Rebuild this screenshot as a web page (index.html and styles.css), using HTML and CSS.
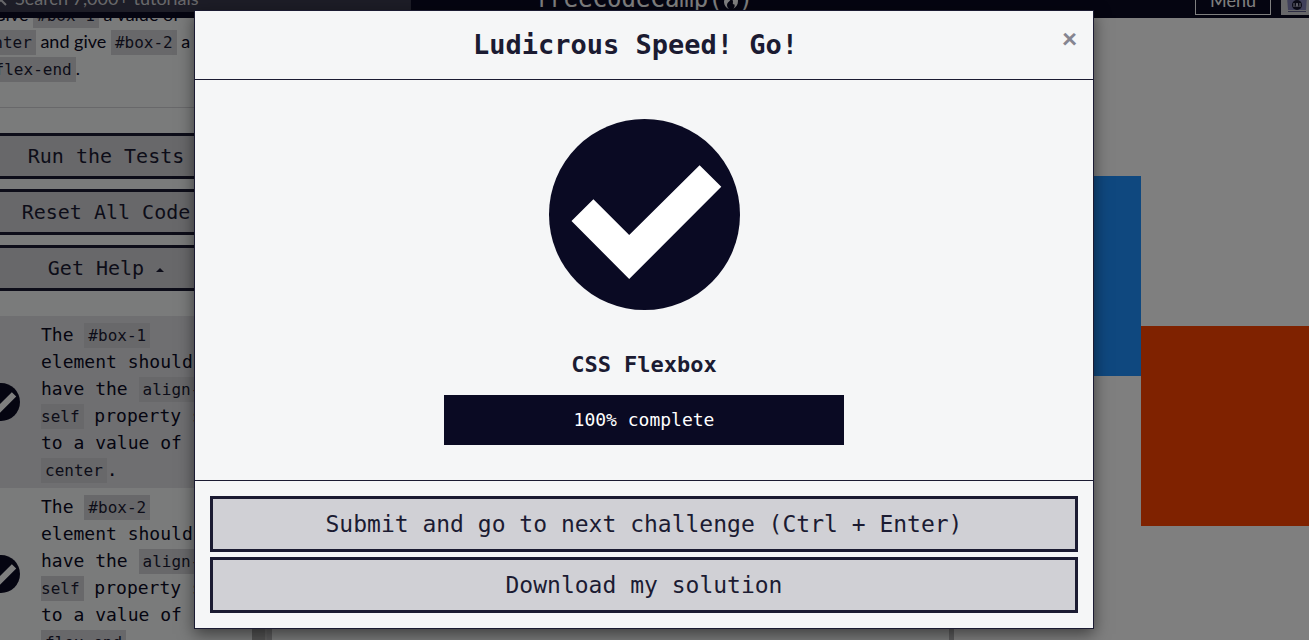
FILE: index.html
```html
<!DOCTYPE html>
<html lang="en">
<head>
<meta charset="utf-8">
<title>CSS Flexbox challenge</title>
<link rel="stylesheet" href="styles.css">
</head>
<body>
<div class="shell">
  <header class="topbar">
    <label class="search">
      <svg class="search-icon" viewBox="0 0 16 16" aria-hidden="true"><circle cx="6.500" cy="6.500" r="5"/><path d="M10 10l5 5"/></svg>
      <input class="search-input" type="search" placeholder="Search 7,000+ tutorials" aria-label="Search tutorials">
    </label>
    <a class="brand" href="#">freeCodeCamp(<svg class="flame" viewBox="0 0 16 20" aria-hidden="true"><path d="M8 0c1 4 7 6 7 12 0 4-2 6-5 8 2-2 2-4 1-5-1 1-1.500 0-1-2 0-2-1-3-2-4 0 3-4 4-4 7 0 2 1 3 2 4-3-1-5-4-5-7C1 8 7 6 8 0z"/></svg>)</a>
    <nav class="account">
      <button class="menu" type="button">Menu</button>
      <a class="avatar" href="#" aria-label="Profile">
        <svg viewBox="0 0 32 32" aria-hidden="true"><path fill="#8080b4" d="M5 0h22l-2 27H7z"/><path fill="#5c5c88" d="M7 28h18v1H7z"/><circle cx="16" cy="22" r="5" fill="#15152c"/><path d="M13 24v-4m6 4v-4m-4 4l1-4 1 4" stroke="#d0d0e5" fill="none"/></svg>
      </a>
    </nav>
  </header>

  <main class="workspace">
    <section class="lesson">
      <p class="instructions"><code class="tail">2</code>. Give <code>#box-1</code> a value of <code>center</code> and give <code>#box-2</code> a value of <code>flex-end</code>.</p>
      <hr>
      <div class="actions">
        <button type="button">Run the Tests</button>
        <button type="button">Reset All Code</button>
        <button type="button">Get Help <span class="caret"></span></button>
      </div>
      <ul class="tests">
        <li>
          <svg class="test-icon" viewBox="0 0 191 191" aria-hidden="true"><circle cx="95.500" cy="95.500" r="95.500"/><path d="M22 102l22-22 36 36 70-70 22 22-92 92z"/></svg>
          <p>The <code>#box-1</code> element should have the <code>align-self</code> property set to a value of <code>center</code>.</p>
        </li>
        <li>
          <svg class="test-icon" viewBox="0 0 191 191" aria-hidden="true"><circle cx="95.500" cy="95.500" r="95.500"/><path d="M22 102l22-22 36 36 70-70 22 22-92 92z"/></svg>
          <p>The <code>#box-2</code> element should have the <code>align-self</code> property set to a value of <code>flex-end</code>.</p>
        </li>
      </ul>
    </section>
    <div class="scroll-track"></div>
    <div class="splitter"></div>
    <section class="editor"></section>
    <div class="splitter"></div>
    <section class="preview">
      <div class="box-container">
        <div class="box box-1"></div>
        <div class="box box-2"></div>
      </div>
    </section>
  </main>

  <div class="backdrop">
    <div class="modal" role="dialog" aria-labelledby="modal-title">
      <div class="modal-header">
        <h4 class="modal-title" id="modal-title">Ludicrous Speed! Go!</h4>
        <button class="close" type="button" aria-label="Close">×</button>
      </div>
      <div class="modal-body">
        <svg class="success" viewBox="0 0 191 191" aria-hidden="true"><circle cx="95.500" cy="95.500" r="95.500"/><path d="M22.500 102L44.400 80.200 80.200 116 150.600 46.200 172.300 67.800 80.200 160z"/></svg>
        <h5 class="block-name">CSS Flexbox</h5>
        <div class="progress">100% complete</div>
      </div>
      <div class="modal-footer">
        <button type="button">Submit and go to next challenge (Ctrl + Enter)</button>
        <button type="button">Download my solution</button>
      </div>
    </div>
  </div>
</div>
</body>
</html>
```

FILE: styles.css
```css
:root {
  --navy: #0a0a23;
  --ink: #1b1b32;
  --paper: #f5f6f7;
  --grey: #d0d0d5;
  --mono: "DejaVu Sans Mono", monospace;
  --sans: Lato, sans-serif;
}

* { box-sizing: border-box; }

body {
  margin: 0;
  overflow: hidden;
  font: 18px/27px var(--sans);
  color: var(--navy);
}

p, h4, h5, ul { margin: 0; padding: 0; }
button { font-family: var(--mono); color: var(--ink); }

.shell {
  position: relative;
  display: flex;
  flex-direction: column;
  height: 100vh;
  margin: 0 -19px 0 -40px;
  overflow: hidden;
}

/* Top bar */
.topbar {
  position: relative;
  z-index: 1;
  flex: none;
  display: grid;
  grid-template-columns: 1fr auto 1fr;
  align-items: center;
  height: 38px;
  margin-top: -20px;
  padding: 0 15px;
  background: var(--navy);
}
.search {
  display: flex;
  align-items: center;
  gap: 8px;
  width: 436px;
  height: 30px;
  padding: 2px 16px 0;
  margin-bottom: 4px;
  background: #3b3b4f;
}
.search-icon { width: 16px; height: 16px; fill: none; stroke: #d0d0d5; stroke-width: 2; }
.search-input {
  flex: 1;
  min-width: 0;
  padding: 0;
  border: 0;
  background: none;
  font: 18px/27px var(--sans);
  color: #d0d0d5;
}
.search-input::placeholder { color: #d0d0d5; }
.brand {
  display: flex;
  align-items: center;
  font: 24px/28px var(--mono);
  color: #fff;
  text-decoration: none;
}
.flame { width: 16px; height: 20px; fill: #fff; }
.account { display: flex; justify-content: flex-end; gap: 10px; }
.menu {
  width: 76px;
  height: 32px;
  padding: 2px 0 0;
  border: 1px solid #fff;
  background: none;
  font: 18px/24px var(--sans);
  color: #fff;
}
.avatar { width: 32px; height: 32px; background: var(--grey); }
.avatar svg { display: block; }

/* Workspace */
.workspace { flex: 1; display: flex; min-height: 0; }
.lesson {
  flex: 0 0 292px;
  padding: 0 10px;
  overflow: hidden;
  background: var(--paper);
}
.scroll-track { flex: 0 0 15px; border-right: 2px solid #c0c0c0; background: #a9a9a9; }
.splitter { flex: 0 0 5px; background: #b8b8bb; }
.editor { flex: 1; background: var(--paper); }
.preview { flex: 0 0 374px; min-width: 0; padding: 8px; background: #fff; }

code {
  padding: 3px 4px;
  background: var(--grey);
  font: 16px/20px var(--mono);
  color: var(--ink);
}
.instructions { margin-top: -17px; }
.tail { padding-left: 0; }
hr { margin: 25px 0; border: 0; border-top: 1px solid var(--grey); }

.actions { display: grid; gap: 10px; margin-bottom: 25px; }
.actions button {
  height: 46px;
  padding: 0;
  border: 3px solid var(--ink);
  background: var(--grey);
  font-size: 20px;
}
.caret {
  display: inline-block;
  vertical-align: middle;
  border: 4px solid transparent;
  border-top: 0;
  border-bottom-color: var(--ink);
}

.tests { list-style: none; }
.tests li {
  display: flex;
  align-items: center;
  gap: 21px;
  padding: 5px 15px 5px 12px;
  font: 18px/27px var(--mono);
}
.tests li:nth-child(odd) { background: #dfdfe2; }
.test-icon { flex: none; width: 38px; height: 38px; }
.test-icon path, .success path { fill: #fff; }
.test-icon circle, .success circle { fill: var(--navy); }

.box-container { display: flex; height: 500px; }
.box { width: 200px; height: 200px; }
.box-1 { align-self: center; background: dodgerblue; }
.box-2 { align-self: flex-end; background: orangered; }

/* Completion dialog */
.backdrop {
  position: absolute;
  inset: 0;
  z-index: 2;
  display: flex;
  justify-content: center;
  align-items: flex-start;
  padding-top: 10px;
  background: rgba(0, 0, 0, .5);
}
.modal {
  width: 900px;
  border: 1px solid var(--ink);
  background: var(--paper);
  box-shadow: 0 5px 15px rgba(0, 0, 0, .5);
  color: var(--ink);
}
.modal-header {
  display: flex;
  align-items: flex-start;
  padding: 15px;
  border-bottom: 1px solid var(--ink);
}
.modal-title { flex: 1; text-align: center; font: bold 27px/38px var(--mono); }
.close {
  width: 17px;
  padding: 0;
  border: 0;
  background: none;
  font: 900 27px/24px var(--sans);
  color: #858591;
}
.modal-body {
  display: flex;
  flex-direction: column;
  align-items: center;
  padding: 39px 15px 35px;
}
.success { width: 191px; height: 191px; }
.block-name { margin: 40px 0 15px; font: bold 22px/30px var(--mono); }
.progress {
  width: 400px;
  background: var(--navy);
  text-align: center;
  font: 18px/50px var(--mono);
  color: #fff;
}
.modal-footer {
  display: grid;
  gap: 5px;
  padding: 15px;
  border-top: 1px solid var(--ink);
}
.modal-footer button {
  height: 56px;
  padding: 0;
  border: 3px solid var(--ink);
  background: var(--grey);
  font-size: 23px;
}
```
